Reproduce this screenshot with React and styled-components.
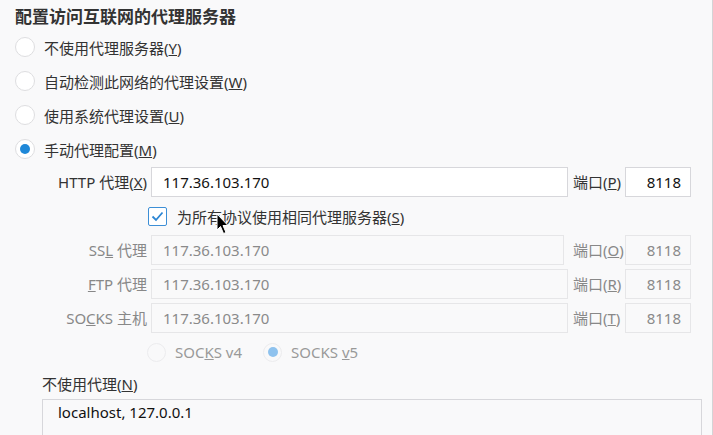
import styled, { createGlobalStyle, css } from 'styled-components'

const Global = createGlobalStyle`
  html, body {
    margin: 0;
    padding: 0;
    background: #f9f9fa;
  }
  body {
    font-family: "Noto Sans", "Noto Sans CJK SC", sans-serif;
    color: #333;
    overflow: hidden;
  }
`

const Page = styled.div`
  position: relative;
  width: 713px;
  height: 435px;
  box-sizing: border-box;
  padding-left: 15px;
  border-right: 1px solid #d4d4d6;
  overflow: hidden;
`

const Title = styled.div`
  height: 30px;
  line-height: 31px;
  font-family: "Noto Sans CJK SC", sans-serif;
  font-size: 17px;
  font-weight: 700;
  color: #333;
  white-space: nowrap;
`

const RadioRow = styled.label`
  display: flex;
  align-items: center;
  height: 34px;
  font-size: 15px;
  color: #333;
  gap: 9px;
`

const Circle = styled.span`
  box-sizing: border-box;
  width: ${p => p.size || 20}px;
  height: ${p => p.size || 20}px;
  border-radius: 50%;
  border: 1px solid ${p => (p.disabled ? '#ececee' : '#dedee0')};
  background: ${p => (p.disabled ? '#f9f9fa' : '#fff')};
  display: flex;
  align-items: center;
  justify-content: center;
  flex: none;
  ${p => p.checked && css`
    &::after {
      content: '';
      width: 10px;
      height: 10px;
      border-radius: 50%;
      background: ${p.disabled ? '#8ec2ee' : '#1f88d8'};
    }
  `}
`

const Grid = styled.div`
  display: grid;
  grid-template-columns: 132px 417px 49px 66px;
  column-gap: 4px;
  row-gap: 4px;
  margin-top: 1px;
`

const Label = styled.div`
  font-size: 15px;
  height: 30px;
  line-height: 30px;
  white-space: nowrap;
  text-align: ${p => (p.left ? 'left' : 'right')};
  color: ${p => (p.disabled ? '#888' : '#333')};
  ${p => p.left && css`margin-left: 1px;`}
`

const Field = styled.div`
  box-sizing: border-box;
  height: 30px;
  line-height: 28px;
  font-size: 15px;
  border: 1px solid ${p => (p.disabled ? '#e6e6e8' : '#d7d7db')};
  background: ${p => (p.disabled ? '#f9f9fa' : '#fff')};
  color: ${p => (p.disabled ? '#8a8a8a' : '#111')};
  padding: 0 ${p => (p.port ? 9 : 11)}px;
  text-align: ${p => (p.port ? 'right' : 'left')};
  ${p => p.short && css`margin-right: 4px;`}
`

const CheckRow = styled.label`
  grid-column: 2 / 5;
  display: flex;
  align-items: center;
  height: 30px;
  gap: 10px;
  margin-left: -3px;
  font-size: 15px;
  color: #333;
`

const Box = styled.span`
  box-sizing: border-box;
  width: 19px;
  height: 19px;
  border: 1px solid #3d8fd6;
  border-radius: 2px;
  background: #fff;
  display: flex;
  align-items: center;
  justify-content: center;
`

const SocksRow = styled.div`
  grid-column: 2 / 5;
  display: flex;
  align-items: center;
  height: 30px;
  margin-left: -4px;
  font-size: 15px;
  color: #999;
`

const SocksOption = styled.span`
  display: flex;
  align-items: center;
  gap: 9px;
  margin-right: ${p => p.spacing || 0}px;
`

const NoProxyLabel = styled.div`
  margin: 4px 0 0 27px;
  height: 26px;
  line-height: 26px;
  font-size: 15px;
  color: #333;
`

const TextArea = styled.div`
  box-sizing: border-box;
  margin: 2px 0 0 27px;
  width: 660px;
  height: 80px;
  border: 1px solid #d7d7db;
  background: #f9f9fa;
  padding: 1px 15px;
  font-size: 15px;
  line-height: 22px;
  color: #111;
`

const Cursor = styled.svg`
  position: absolute;
  left: 216px;
  top: 213px;
  width: 13px;
  height: 22px;
`

const rows = [
  { label: <>SS<u>L</u> 代理</>, port: <>端口(<u>O</u>)</> },
  { label: <><u>F</u>TP 代理</>, port: <>端口(<u>R</u>)</> },
  { label: <>SO<u>C</u>KS 主机</>, port: <>端口(<u>T</u>)</> },
]

export default function App() {
  return (
    <Page>
      <Global />
      <Title>配置访问互联网的代理服务器</Title>
      <RadioRow><Circle /><span>不使用代理服务器(<u>Y</u>)</span></RadioRow>
      <RadioRow><Circle /><span>自动检测此网络的代理设置(<u>W</u>)</span></RadioRow>
      <RadioRow><Circle /><span>使用系统代理设置(<u>U</u>)</span></RadioRow>
      <RadioRow><Circle checked /><span>手动代理配置(<u>M</u>)</span></RadioRow>
      <Grid>
        <Label>HTTP 代理(<u>X</u>)</Label>
        <Field>117.36.103.170</Field>
        <Label left>端口(<u>P</u>)</Label>
        <Field port>8118</Field>
        <CheckRow>
          <Box>
            <svg width="13" height="11" viewBox="0 0 13 11">
              <path d="M1.5 5.5 L5 9 L11.5 1.5" fill="none" stroke="#2c86d4" strokeWidth="1.8" />
            </svg>
          </Box>
          <span>为所有协议使用相同代理服务器(<u>S</u>)</span>
        </CheckRow>
        {rows.map((r, i) => (
          <Row key={i} r={r} short={i === 0} />
        ))}
        <div />
        <SocksRow>
          <SocksOption spacing={21}>
            <Circle size={19} disabled />
            <span>SOC<u>K</u>S v4</span>
          </SocksOption>
          <SocksOption>
            <Circle size={19} disabled checked />
            <span>SOCKS <u>v</u>5</span>
          </SocksOption>
        </SocksRow>
      </Grid>
      <NoProxyLabel>不使用代理(<u>N</u>)</NoProxyLabel>
      <TextArea>localhost, 127.0.0.1</TextArea>
      <Cursor viewBox="0 0 13 22">
        <path d="M1 1 L1 17 L4.5 13.5 L7.5 20.5 L10 19.5 L7 12.5 L12 12.5 Z" fill="#000" stroke="#fff" strokeWidth="1" />
      </Cursor>
    </Page>
  )
}

function Row({ r, short }) {
  return (
    <>
      <Label disabled>{r.label}</Label>
      <Field disabled short={short}>117.36.103.170</Field>
      <Label left disabled>{r.port}</Label>
      <Field disabled port>8118</Field>
    </>
  )
}
